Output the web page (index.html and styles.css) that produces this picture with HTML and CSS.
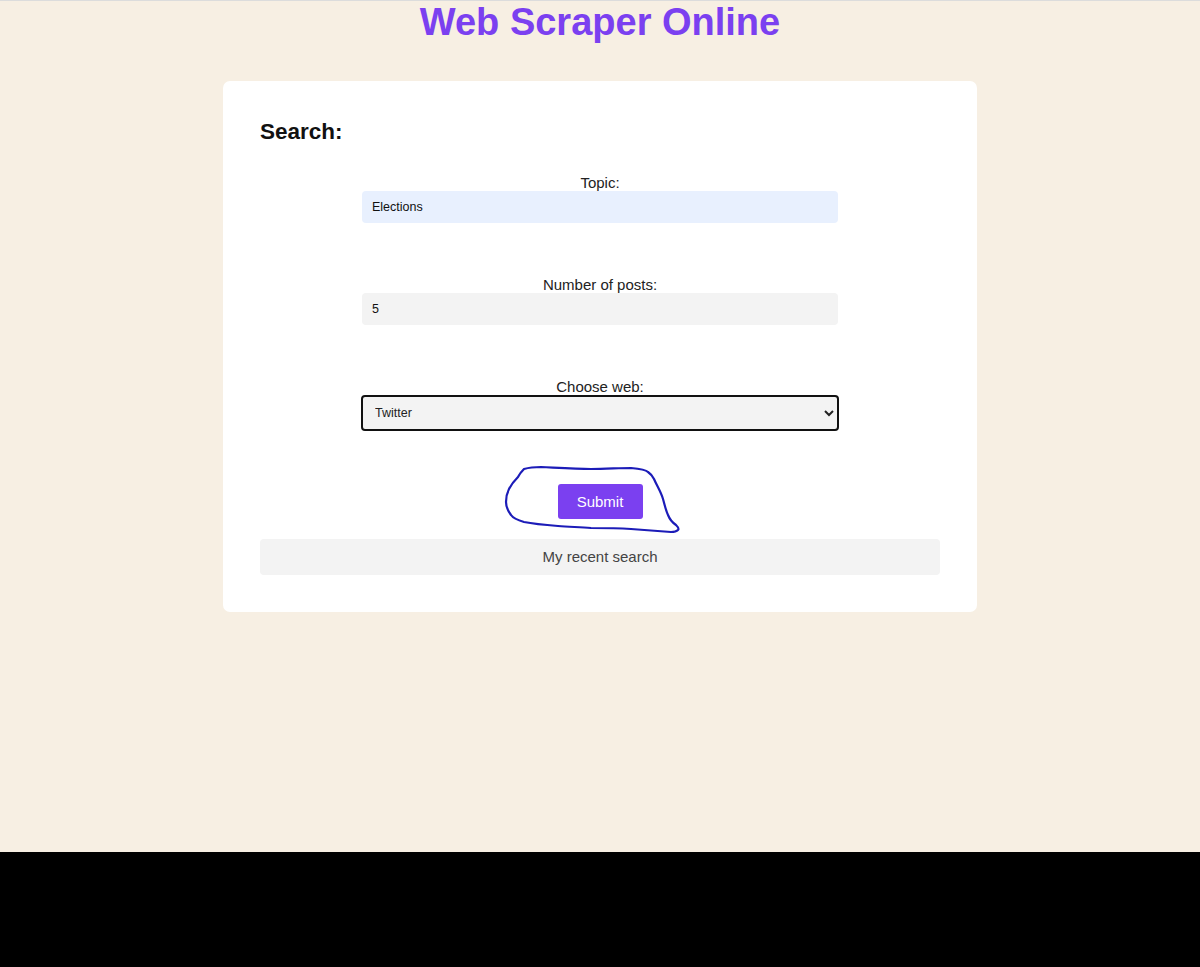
FILE: index.html
```html
<!DOCTYPE html>
<html lang="en">
<head>
<meta charset="utf-8">
<title>Web Scraper Online</title>
<link rel="stylesheet" href="styles.css">
</head>
<body>
<div class="page">
  <h1 class="title">Web Scraper Online</h1>
  <main class="card">
    <h2 class="heading">Search:</h2>
    <form class="form">
      <div class="group">
        <label class="label" for="topic">Topic:</label>
        <input class="field field-autofill" id="topic" type="text" value="Elections">
      </div>
      <div class="group">
        <label class="label" for="num">Number of posts:</label>
        <input class="field" id="num" type="text" value="5">
      </div>
      <div class="group">
        <label class="label" for="web">Choose web:</label>
        <select class="select" id="web">
          <option>Twitter</option>
        </select>
      </div>
      <div class="submit-wrap">
        <button class="submit" type="button">Submit</button>
        <svg class="scribble" width="185" height="80" viewBox="0 0 185 80">
          <path d="M23 7 C30 5 36 5 40 5 C60 6 75 7 90 7 C105 7 118 6 130 6 C140 7 145 8 147 10 C150 12 152 15 153 17 C156 24 160 30 162 37 C164 44 165 49 167 53 C169 58 172 61 175 63 C177 65 178 67 177 68 C175 70 172 70 170 70 C155 69 142 68 130 67 C115 66 102 66 90 66 C78 65 68 65 57 64 C44 63 33 62 23 60 C16 58 12 56 10 53 C7 49 5 45 5 40 C5 35 6 31 8 27 C11 21 14 18 17 15 C19 11 21 9 23 7 Z" fill="none" stroke="#1c1cb8" stroke-width="2.2" stroke-linecap="round" stroke-linejoin="round"/>
        </svg>
      </div>
    </form>
    <div class="recent">My recent search</div>
  </main>
</div>
</body>
</html>
```

FILE: styles.css
```css
html {
  background: #000;
}

body {
  margin: 0;
  font-family: "Liberation Sans", Arial, sans-serif;
}

.page {
  height: 851px;
  background: #f7efe3;
  border-top: 1px solid #dcdcdc;
  display: flex;
  flex-direction: column;
  align-items: center;
}

.title {
  margin: -1px 0 0;
  font-size: 38px;
  line-height: 44px;
  font-weight: bold;
  color: #7b40f0;
}

.card {
  margin-top: 37px;
  width: 680px;
  padding: 37px;
  background: #fff;
  border-radius: 7px;
}

.heading {
  margin: 1px 0 0;
  font-size: 22.5px;
  line-height: 26px;
  font-weight: bold;
  color: #111;
}

.form {
  margin-top: 29px;
  display: flex;
  flex-direction: column;
  align-items: center;
}

.group {
  width: 478px;
  display: flex;
  flex-direction: column;
  align-items: center;
  margin-bottom: 53px;
}

.label {
  font-size: 15px;
  line-height: 17px;
  color: #222;
}

.field {
  box-sizing: border-box;
  width: 476px;
  height: 32px;
  border: none;
  border-radius: 4px;
  background: #f3f3f3;
  padding: 0 10px;
  font-family: "Liberation Sans", Arial, sans-serif;
  font-size: 12.5px;
  color: #111;
  outline: none;
}

.field-autofill {
  background: #e8f0fe;
}

.select {
  box-sizing: border-box;
  width: 478px;
  height: 36px;
  border: 2px solid #111;
  border-radius: 4px;
  background: #f3f3f3;
  padding: 0 8px;
  font-family: "Liberation Sans", Arial, sans-serif;
  font-size: 12.5px;
  color: #222;
}

.submit-wrap {
  position: relative;
}

.submit {
  width: 85px;
  height: 35px;
  border: none;
  border-radius: 3px;
  background: #7b40f0;
  color: #fff;
  font-family: "Liberation Sans", Arial, sans-serif;
  font-size: 15px;
  display: block;
}

.scribble {
  position: absolute;
  left: -57px;
  top: -22px;
  pointer-events: none;
}

.recent {
  margin-top: 20px;
  height: 36px;
  line-height: 36px;
  background: #f3f3f3;
  border-radius: 4px;
  text-align: center;
  font-size: 15px;
  color: #444;
}
```
